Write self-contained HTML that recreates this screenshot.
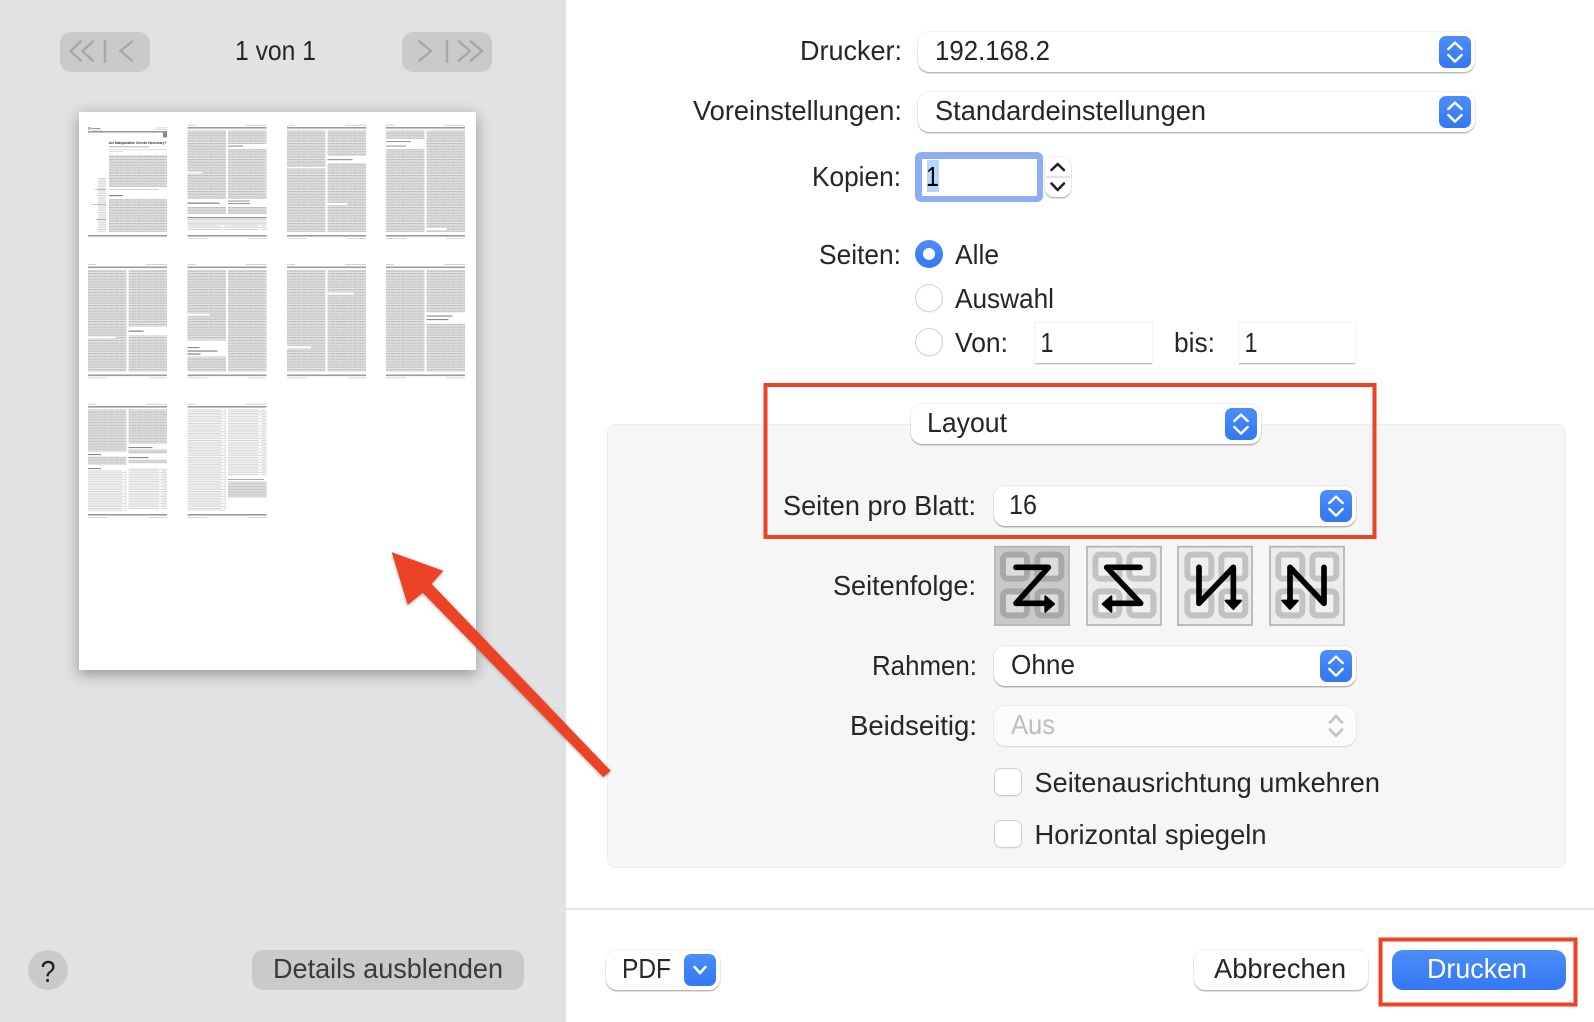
<!DOCTYPE html>
<html lang="de"><head><meta charset="utf-8"><title>Drucken</title>
<style>
html,body{margin:0;padding:0;background:#fff}
#r{position:relative;width:1594px;height:1022px;overflow:hidden;background:#fff;font-family:"Liberation Sans",sans-serif}
#r>div{position:absolute;box-sizing:border-box}
.pop{background:#fff;border-radius:11px;box-shadow:0 0 0 1px rgba(0,0,0,.055),0 1.5px 1px rgba(0,0,0,.24)}
.fld{background:#fff;box-shadow:0 0 0 1px rgba(0,0,0,.05),0 1.5px 0 rgba(0,0,0,.2)}
.rad{background:#fff;border-radius:50%;box-shadow:inset 0 0 0 1px #d2d2d2,0 1px 1px rgba(0,0,0,.08)}
.chk{background:#fff;border-radius:7px;box-shadow:inset 0 0 0 1px #cfcfcf,0 1px 1px rgba(0,0,0,.06)}
.gb{background:#c9cacc;border-radius:11px}
svg{position:absolute;left:0;top:0}
text{font-family:"Liberation Sans",sans-serif;font-size:27.5px;fill:#262626}
</style></head><body>
<div id="r">
<div style="left:0;top:0;width:566px;height:1022px;background:#e1e2e4"></div>
<div class="gb" style="left:60px;top:32px;width:90px;height:40px"></div>
<div class="gb" style="left:402px;top:32px;width:90px;height:40px"></div>
<div style="left:79px;top:112px;width:397px;height:558px;background:#fff;box-shadow:0 4px 14px rgba(0,0,0,.36)"></div>
<div class="gb" style="left:28px;top:950px;width:40px;height:40px;border-radius:50%"></div>
<div class="gb" style="left:252px;top:950px;width:272px;height:40px"></div>

<div style="left:566px;top:908px;width:1028px;height:2px;background:#e7e7e7"></div>
<div style="left:607px;top:424px;width:959px;height:444px;background:#f6f6f6;border:1px solid #ececec;border-radius:9px"></div>

<div class="pop" style="left:918px;top:32px;width:557px;height:40px"></div>
<div class="pop" style="left:918px;top:92px;width:557px;height:40px"></div>
<div style="left:915px;top:152px;width:128px;height:50px;background:#8fadf5;border-radius:6px"></div>
<div style="left:922px;top:159px;width:115px;height:37px;background:#fff"></div>
<div style="left:927px;top:160px;width:12px;height:32px;background:#b3d7ff"></div>
<div class="pop" style="left:1045px;top:157px;width:26px;height:40px;border-radius:9px"></div>
<div style="left:1046px;top:176px;width:24px;height:2px;background:#e4e4e4"></div>

<div class="rad" style="left:915px;top:284px;width:28px;height:28px"></div>
<div class="rad" style="left:915px;top:328px;width:28px;height:28px"></div>
<div style="left:915px;top:240px;width:28px;height:28px;border-radius:50%;background:linear-gradient(#4c8ef8,#3377f5)"></div>
<div style="left:923px;top:248px;width:12px;height:12px;border-radius:50%;background:#fff"></div>
<div class="fld" style="left:1034.5px;top:323px;width:117.5px;height:40px"></div>
<div class="fld" style="left:1238.5px;top:323px;width:116.5px;height:40px"></div>

<div class="pop" style="left:911px;top:404px;width:350px;height:40px"></div>
<div class="pop" style="left:994px;top:486px;width:362px;height:40px"></div>
<div class="pop" style="left:994px;top:646px;width:362px;height:40px"></div>
<div style="left:994px;top:706px;width:362px;height:40px;background:#fbfbfb;border-radius:11px;box-shadow:0 0 0 1px rgba(0,0,0,.04),0 1px 1px rgba(0,0,0,.1)"></div>
<div class="chk" style="left:994px;top:768px;width:28px;height:28px"></div>
<div class="chk" style="left:994px;top:820px;width:28px;height:28px"></div>

<div class="pop" style="left:606px;top:950px;width:114px;height:40px"></div>
<div class="pop" style="left:1194px;top:950px;width:174px;height:40px"></div>
<div style="left:1392px;top:950px;width:174px;height:40px;border-radius:11px;background:linear-gradient(#4c8ef8,#3377f5)"></div>

<svg width="1594" height="1022" viewBox="0 0 1594 1022" xmlns="http://www.w3.org/2000/svg">
<defs>
<linearGradient id="bg" x1="0" y1="0" x2="0" y2="1"><stop offset="0" stop-color="#4c8ef8"/><stop offset="1" stop-color="#3377f5"/></linearGradient>
<pattern id="t" patternUnits="userSpaceOnUse" width="17" height="3.2"><rect width="17" height="3.2" fill="#f0f0f0"/><rect width="17" height=".8" fill="#b0b0b0"/><rect y="1.6" width="17" height=".8" fill="#b8b8b8"/><g fill="#dcdcdc"><rect x="3.4" width=".7" height=".8"/><rect x="9.2" width=".7" height=".8"/><rect x="14.3" width=".7" height=".8"/><rect x="1" y="1.6" width=".7" height=".8"/><rect x="6.6" y="1.6" width=".7" height=".8"/><rect x="12" y="1.6" width=".7" height=".8"/></g></pattern>
<pattern id="u" patternUnits="userSpaceOnUse" width="37" height="3.4"><rect width="37" height="3.4" fill="#fbfbfb"/><rect width="34" height=".8" fill="#cccccc"/><rect y="1.7" width="37" height=".8" fill="#d4d4d4"/></pattern>
<symbol id="st" viewBox="0 0 32 32" overflow="visible"><rect width="32" height="32" rx="7" fill="url(#bg)"/><path d="M9.3 13 16 6.6 22.7 13M9.3 19 16 25.6 22.7 19" fill="none" stroke="#fff" stroke-width="2.4" stroke-linecap="round" stroke-linejoin="round"/></symbol>
<g id="th"><rect width="79" height="1.6" fill="#9a9a9a"/><rect y="-2.2" width="8" height=".8" fill="#c4c4c4"/><rect x="58" y="-2.2" width="21" height=".8" fill="#c4c4c4"/><rect y="3.5" width="38.5" height="101.5" fill="url(#t)"/><rect x="40.5" y="3.5" width="38.5" height="101.5" fill="url(#t)"/><rect y="108" width="79" height="1.6" fill="#9a9a9a"/><rect y="111" width="20" height=".7" fill="#c8c8c8"/><rect x="60" y="111" width="19" height=".7" fill="#c8c8c8"/></g>
</defs>

<!-- thumbnails -->
<g style="filter:blur(.35px)">
<g transform="translate(88,127)">
<rect y="4" width="79" height="1.6" fill="#9a9a9a"/><rect y="108" width="79" height="1.6" fill="#9a9a9a"/>
<rect x="0" y="0" width="3" height="3" fill="#bbb"/><rect x="3.5" y="1" width="9" height="1" fill="#999"/><rect x="4" y="2.8" width="10" height=".6" fill="#bbb"/><rect x="68" y=".5" width="11" height=".7" fill="#c4c4c4"/><rect x="67" y="2.3" width="12" height=".6" fill="#c4c4c4"/>
<rect x="75" y="5.4" width="4" height="5" fill="#888"/>
<text x="20.6" y="17" textLength="58" lengthAdjust="spacingAndGlyphs" style="font-size:3.6px;font-weight:bold;fill:#333">Are Manipulation Checks Necessary?</text>
<rect x="21" y="19.4" width="40" height=".9" fill="#aaa"/><rect x="21" y="22.4" width="58" height=".7" fill="#d0d0d0"/><rect x="21" y="24.2" width="14" height=".7" fill="#d0d0d0"/>
<rect x="21" y="28" width="58" height="32" fill="url(#t)"/><rect x="21" y="62" width="50" height=".8" fill="#c8c8c8"/>
<rect x="21" y="68" width="14" height="1.2" fill="#888"/>
<rect x="21" y="72" width="58" height="33" fill="url(#t)"/>
<rect x="1" y="51" width="17" height="54" fill="url(#u)"/>
<rect x="1" y="51" width="9" height="54" fill="#fff"/>
<rect x="7" y="62" width="11" height=".9" fill="#bbb"/><rect x="4" y="77" width="14" height=".9" fill="#bbb"/><rect x="8" y="92" width="10" height="1" fill="#aaa"/>
</g>
<use href="#th" x="187.5" y="127"/>
<g transform="translate(187.5,127)"><rect x="40.5" y="17" width="38.5" height="5" fill="#fff"/><rect x="40.5" y="18.5" width="15" height="1.2" fill="#999"/><rect x="0" y="45" width="15" height="1.5" fill="#fff"/><rect y="72" width="38.5" height="8" fill="#fff"/><rect y="75.5" width="32" height="1.3" fill="#888"/><rect x="40.5" y="72" width="38.5" height="8" fill="#fff"/><rect x="40.5" y="73.5" width="22" height="1.1" fill="#999"/><rect x="40.5" y="76" width="22" height="1.1" fill="#999"/><rect y="87" width="79" height="20" fill="#fff"/><rect y="90" width="79" height="1.2" fill="#8f8f8f"/><rect y="92" width="79" height=".5" fill="#aaa"/><rect y="93.5" width="79" height="2.4" fill="#e8e8e8"/><rect y="96.6" width="79" height=".7" fill="#aaa"/><rect y="98" width="79" height="5" fill="url(#u)"/></g>
<use href="#th" x="287" y="127"/>
<g transform="translate(287,127)"><rect x="40.5" y="29" width="38.5" height="7" fill="#fff"/><rect x="40.5" y="32" width="25" height="1.2" fill="#999"/><rect x="0" y="40" width="38.5" height="1.5" fill="#fff"/><rect x="40.5" y="76" width="20" height="2" fill="#fff"/></g>
<use href="#th" x="386" y="127"/>
<g transform="translate(386,127)"><rect y="12" width="38.5" height="10" fill="#fff"/><rect y="14" width="25" height="1.1" fill="#999"/><rect y="18.5" width="20" height="1.1" fill="#999"/><rect x="40.5" y="101" width="20" height="2" fill="#fff"/></g>

<use href="#th" x="88" y="266.5"/>
<g transform="translate(88,266.5)"><rect x="40.5" y="60" width="38.5" height="9" fill="#fff"/><rect x="40.5" y="64" width="15" height="1.3" fill="#888"/><rect y="70" width="28" height="2" fill="#fff"/></g>
<use href="#th" x="187.5" y="266.5"/>
<g transform="translate(187.5,266.5)"><rect y="74" width="38.5" height="16" fill="#fff"/><rect y="80.5" width="12" height="1.1" fill="#888"/><rect y="84" width="30" height="1.1" fill="#777"/><rect y="87" width="13" height="1.1" fill="#777"/><rect y="47" width="22" height="2" fill="#fff"/></g>
<use href="#th" x="287" y="266.5"/>
<g transform="translate(287,266.5)"><rect x="40.5" y="26" width="26" height="2" fill="#fff"/><rect x="0" y="80" width="24" height="2" fill="#fff"/></g>
<use href="#th" x="386" y="266.5"/>
<g transform="translate(386,266.5)"><rect x="40.5" y="46" width="38.5" height="11" fill="#fff"/><rect x="40.5" y="49" width="26" height="1.1" fill="#888"/><rect x="40.5" y="52.5" width="22" height="1.1" fill="#888"/></g>

<g transform="translate(88,406)">
<rect width="79" height="1.6" fill="#9a9a9a"/><rect y="-2.2" width="8" height=".8" fill="#c4c4c4"/><rect x="58" y="-2.2" width="21" height=".8" fill="#c4c4c4"/>
<rect y="3.5" width="38.5" height="42" fill="url(#t)"/><rect x="40.5" y="3.5" width="38.5" height="34" fill="url(#t)"/>
<rect y="48" width="13" height="1.1" fill="#888"/><rect y="50.5" width="38.5" height="8" fill="url(#t)"/>
<rect y="62" width="13" height="1.1" fill="#888"/><rect y="64.5" width="38.5" height="41" fill="url(#u)"/>
<rect x="40.5" y="41" width="24" height="1.1" fill="#888"/><rect x="40.5" y="43.5" width="38.5" height="4" fill="url(#t)"/>
<rect x="40.5" y="51" width="20" height="1.1" fill="#888"/><rect x="40.5" y="53.5" width="38.5" height="4" fill="url(#t)"/>
<rect x="40.5" y="62" width="38.5" height="41" fill="url(#u)"/>
<rect y="108" width="79" height="1.6" fill="#9a9a9a"/><rect y="111" width="20" height=".7" fill="#c8c8c8"/><rect x="60" y="111" width="19" height=".7" fill="#c8c8c8"/>
</g>
<g transform="translate(187.5,406)">
<rect width="79" height="1.6" fill="#9a9a9a"/><rect y="-2.2" width="8" height=".8" fill="#c4c4c4"/><rect x="58" y="-2.2" width="21" height=".8" fill="#c4c4c4"/>
<rect y="3.5" width="38.5" height="101" fill="url(#u)"/><rect x="40.5" y="3.5" width="38.5" height="66" fill="url(#u)"/>
<rect x="40.5" y="73" width="36" height="1" fill="#aaa"/><rect x="40.5" y="75.5" width="38.5" height="16" fill="url(#t)"/>
<rect y="108" width="79" height="1.6" fill="#9a9a9a"/><rect y="111" width="20" height=".7" fill="#c8c8c8"/><rect x="60" y="111" width="19" height=".7" fill="#c8c8c8"/>
</g>
</g>

<!-- nav icons -->
<g fill="none" stroke="#a6a7a9" stroke-width="2.4">
<path d="M81.4 40.7 70.5 51 81.4 61.3M93.6 40.7 82.5 51 93.6 61.3M133 40.7 120.5 51 133 61.3M418.6 40.7 431 51 418.6 61.3M458 40.7 470 51 458 61.3M470 40.7 482 51 470 61.3"/>
<path d="M105 40V63M447 40V63"/>
</g>

<!-- left text -->
<text x="235" y="60" textLength="81" lengthAdjust="spacingAndGlyphs">1 von 1</text>
<text x="40.5" y="982" textLength="15" lengthAdjust="spacingAndGlyphs" style="fill:#1f1f1f;font-size:31px">?</text>
<text x="273" y="978" textLength="230" lengthAdjust="spacingAndGlyphs" style="fill:#3a3a3a">Details ausblenden</text>

<!-- labels -->
<text x="800" y="60" textLength="102" lengthAdjust="spacingAndGlyphs">Drucker:</text>
<text x="935" y="60" textLength="115" lengthAdjust="spacingAndGlyphs">192.168.2</text>
<text x="693" y="120" textLength="209" lengthAdjust="spacingAndGlyphs">Voreinstellungen:</text>
<text x="935" y="120" textLength="271" lengthAdjust="spacingAndGlyphs">Standardeinstellungen</text>
<text x="812" y="186" textLength="89" lengthAdjust="spacingAndGlyphs">Kopien:</text>
<text x="926" y="186" textLength="13" lengthAdjust="spacingAndGlyphs" style="fill:#000">1</text>
<text x="819" y="264" textLength="82" lengthAdjust="spacingAndGlyphs">Seiten:</text>
<text x="955" y="264" textLength="44" lengthAdjust="spacingAndGlyphs">Alle</text>
<text x="955" y="308" textLength="99" lengthAdjust="spacingAndGlyphs">Auswahl</text>
<text x="955" y="352" textLength="53" lengthAdjust="spacingAndGlyphs">Von:</text>
<text x="1040.5" y="352" textLength="13" lengthAdjust="spacingAndGlyphs">1</text>
<text x="1174" y="352" textLength="41" lengthAdjust="spacingAndGlyphs">bis:</text>
<text x="1244.5" y="352" textLength="13" lengthAdjust="spacingAndGlyphs">1</text>
<text x="927" y="432" textLength="80" lengthAdjust="spacingAndGlyphs">Layout</text>
<text x="783" y="515" textLength="193" lengthAdjust="spacingAndGlyphs">Seiten pro Blatt:</text>
<text x="1009" y="514" textLength="28" lengthAdjust="spacingAndGlyphs">16</text>
<text x="833" y="595" textLength="143" lengthAdjust="spacingAndGlyphs">Seitenfolge:</text>
<text x="872" y="675" textLength="105" lengthAdjust="spacingAndGlyphs">Rahmen:</text>
<text x="1011" y="674" textLength="64" lengthAdjust="spacingAndGlyphs">Ohne</text>
<text x="850" y="735" textLength="127" lengthAdjust="spacingAndGlyphs">Beidseitig:</text>
<text x="1011" y="734" textLength="44" lengthAdjust="spacingAndGlyphs" style="fill:#bdbdbd">Aus</text>
<text x="1034.5" y="792" textLength="345.5" lengthAdjust="spacingAndGlyphs">Seitenausrichtung umkehren</text>
<text x="1034.5" y="844" textLength="232" lengthAdjust="spacingAndGlyphs">Horizontal spiegeln</text>
<text x="622" y="978" textLength="49" lengthAdjust="spacingAndGlyphs">PDF</text>
<text x="1214" y="978" textLength="132" lengthAdjust="spacingAndGlyphs">Abbrechen</text>
<text x="1427" y="978" textLength="100" lengthAdjust="spacingAndGlyphs" style="fill:#fff">Drucken</text>

<!-- steppers -->
<use href="#st" x="1439" y="36" width="32" height="32"/>
<use href="#st" x="1439" y="96" width="32" height="32"/>
<use href="#st" x="1225" y="408" width="32" height="32"/>
<use href="#st" x="1320" y="490" width="32" height="32"/>
<use href="#st" x="1320" y="650" width="32" height="32"/>
<path d="M1051.5 170 1057.7 164 1063.9 170M1051.5 183.5 1057.7 190 1063.9 183.5" fill="none" stroke="#222" stroke-width="2.6" stroke-linecap="round" stroke-linejoin="round"/>
<path d="M1330 722.5 1336 716 1342 722.5M1330 729.5 1336 736 1342 729.5" fill="none" stroke="#c2c2c2" stroke-width="2.6" stroke-linecap="round" stroke-linejoin="round"/>
<rect x="684" y="954" width="32" height="32" rx="7" fill="url(#bg)"/>
<path d="M694.5 967 700 973 705.5 967" fill="none" stroke="#fff" stroke-width="2.6" stroke-linecap="round" stroke-linejoin="round"/>

<!-- Seitenfolge icons -->
<svg x="980" y="535" width="370" height="100" viewBox="0 0 1110 300">
<g stroke="#b2b2b2" stroke-width="5"><rect x="45" y="35" width="222" height="235" fill="#c9c9c9"/><rect x="321" y="35" width="222" height="235" fill="#ececec"/><rect x="594" y="35" width="222" height="235" fill="#ececec"/><rect x="870" y="35" width="222" height="235" fill="#ececec"/></g>
<g stroke-width="18" fill="#dcdcdc" stroke="#a8a8a8"><rect x="69" y="59" width="72" height="72" rx="14"/><rect x="172" y="59" width="72" height="72" rx="14"/><rect x="69" y="169" width="72" height="72" rx="14"/><rect x="172" y="169" width="72" height="72" rx="14"/></g>
<g stroke-width="18" fill="#f0f0f0" stroke="#c2c2c2">
<rect x="346" y="59" width="72" height="72" rx="14"/><rect x="448" y="59" width="72" height="72" rx="14"/><rect x="346" y="169" width="72" height="72" rx="14"/><rect x="448" y="169" width="72" height="72" rx="14"/>
<rect x="622" y="59" width="72" height="72" rx="14"/><rect x="724" y="59" width="72" height="72" rx="14"/><rect x="622" y="169" width="72" height="72" rx="14"/><rect x="724" y="169" width="72" height="72" rx="14"/>
<rect x="895" y="59" width="72" height="72" rx="14"/><rect x="997" y="59" width="72" height="72" rx="14"/><rect x="895" y="169" width="72" height="72" rx="14"/><rect x="997" y="169" width="72" height="72" rx="14"/></g>
<g fill="none" stroke="#000" stroke-width="17" stroke-linecap="round" stroke-linejoin="round">
<path d="M108 97H205L108 205H200"/>
<path d="M480 97H380L482 205H388"/>
<path d="M657 97V205L760 97V200"/>
<path d="M1032 97V205L930 97V200"/></g>
<g fill="#000" stroke="#000" stroke-width="6" stroke-linejoin="round">
<path d="M196 184 222 207 196 230Z"/><path d="M394 184 368 207 394 230Z"/><path d="M737 197 760 222 783 197Z"/><path d="M907 197 930 222 953 197Z"/></g>
</svg>

<!-- annotations -->
<g fill="none" stroke="#ec4226">
<rect x="765.5" y="385" width="609" height="152" stroke-width="4"/>
<rect x="1380.5" y="939.5" width="195" height="65" stroke-width="4"/>
</g>
<path d="M391.7 552.3 443.3 570.7 431.7 584 610.7 770.7 603.3 777.3 422.7 592.7 407.7 605Z" fill="#ec4226" style="filter:drop-shadow(0 1px 1.5px rgba(0,0,0,.3))"/>
</svg>
</div>
</body></html>
